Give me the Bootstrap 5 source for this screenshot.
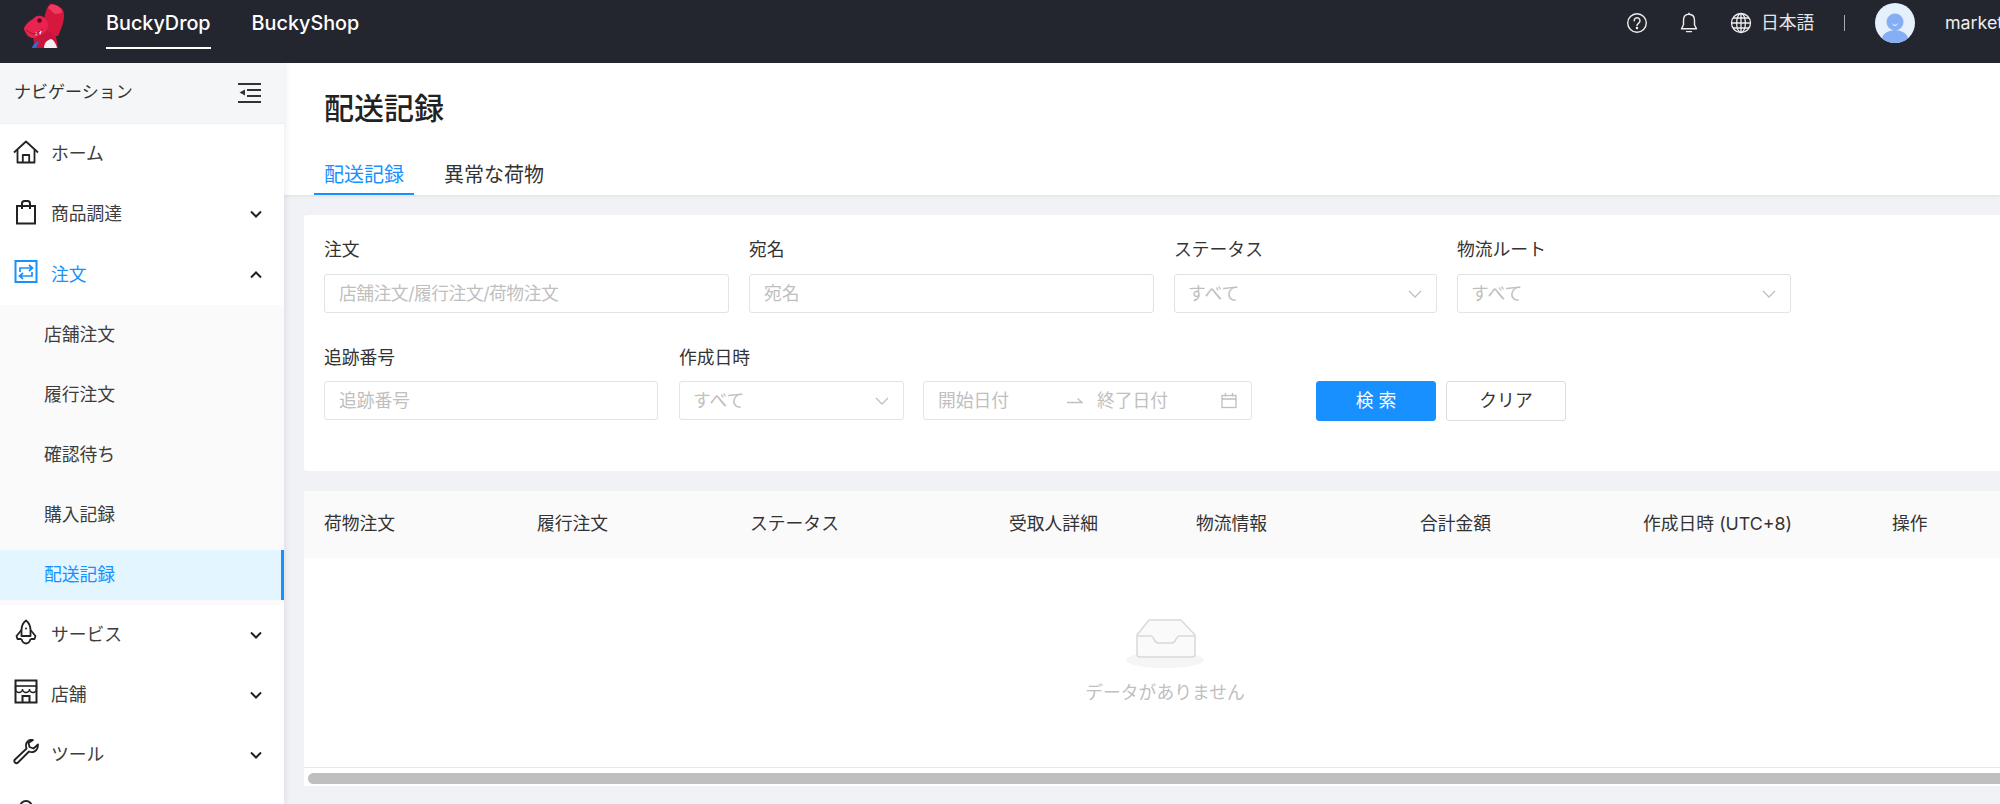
<!DOCTYPE html>
<html lang="ja">
<head>
<meta charset="utf-8">
<title>配送記録</title>
<link href="https://cdn.jsdelivr.net/npm/bootstrap@5.3.0/dist/css/bootstrap.min.css" rel="stylesheet">
<style>
:root{--blue:#1890ff;--ink:#333;--line:#e3e3e3;--ph:#bfbfbf}
html,body{height:804px;overflow:hidden}
body{font-family:Inter,"Noto Sans CJK JP",sans-serif;font-size:17.8px;color:var(--ink);background:#f0f2f5}
.top-bar{height:63px;background:#23262e;padding:0;flex-wrap:nowrap;align-items:stretch}
.brand-logo{width:106px;flex:none;padding:0}
.brand-link{color:#fff;font-size:19.8px;font-weight:500;padding:0;height:49px;line-height:47px;border-bottom:2px solid transparent}
.brand-link.on{border-bottom-color:#fff}
.brand-link:hover{color:#fff}
.brand-gap{gap:41px}
.top-right{height:46px;color:#e8e8e8;white-space:nowrap;margin-left:auto;width:374px;overflow:hidden;flex:none}
.top-right svg{flex:none}
.top-right .lang{width:50px;flex:none;color:#e6e6e6;line-height:1;white-space:nowrap}
.top-right .sep{width:1px;height:16px;background:#aaa;flex:none}
.top-right .who{color:#eee;font-size:17.8px}
.gap-a{margin-left:31px}.gap-b{margin-left:9px}.gap-c{margin-left:33px}.gap-d{margin-left:30px}
.shell{height:741px;overflow:hidden}
.side{width:284px;flex:none;background:#fff;box-shadow:2px 0 6px rgba(0,21,41,.07);position:relative;z-index:2;overflow:hidden}
.side-head{height:61px;background:#f5f6f8;padding:0 22px 0 14px;font-size:17px;border-bottom:1px solid #f0f0f0}
.side-list{padding-top:6px}
.side-row{height:50px;margin-bottom:10px;padding:0 22px 2px 51px;position:relative;color:#3d3d3d;line-height:1}
.side-row .ic{position:absolute;left:13px;top:9px;width:26px;height:26px;color:#222}
.side-row.act{color:var(--blue);padding-bottom:0}
.side-row.act .ic{color:var(--blue)}
.side-sub{background:#fafafa;margin-top:-5px;padding:5px 0;margin-bottom:5px}
.side-sub .side-row{padding-left:44px;margin-bottom:10px;padding-bottom:0}
.side-sub .side-row:last-child{margin-bottom:0;background:#e3f5ff;color:var(--blue);border-right:3px solid var(--blue)}
.side-sub ~ .side-row{padding-bottom:0}
.page-main{min-width:0;flex:1 1 auto;overflow:hidden}
.page-head{height:132px;background:#fff;padding:0 0 0 40px;box-shadow:0 1px 4px rgba(0,21,41,.08);position:relative;z-index:1}
.page-head h1{font-size:30px;font-weight:500;margin:0;line-height:1;padding-top:30px;height:100px;color:#222}
.tab-strip{margin-left:-10px}
.tab-item{height:32px;padding:0 10px;font-size:20px;line-height:24px;color:#333;border-bottom:2px solid transparent;white-space:nowrap}
.tab-item.on{color:var(--blue);border-bottom-color:var(--blue);width:100px}
.tab-strip .tab-item + .tab-item{margin-left:20px}
.filter-pane{margin:20px 0 0 20px;height:256px;background:#fff;border-radius:3px 0 0 3px;padding:23px 0 0 20px}
.f-line{height:108px}
.f-line.second{height:106px}
.f-line:not(.second) label{margin-bottom:10px}
.f-col{flex:none}
.f-col label{display:block;line-height:24px;height:26px;margin:0 0 9px;color:#333;font-size:17.8px}
.w405{width:405px}.w263{width:263px}.w334{width:334px}.w225{width:225px}.w329{width:329px}
.f-ctl{height:39px;border:1px solid var(--line);border-radius:3px;font-size:17.8px;padding:0 14px;color:var(--ph);box-shadow:none;line-height:1}
.f-ctl::placeholder{color:var(--ph);opacity:1}
.tight::placeholder{letter-spacing:-.5px}
.select-box{padding:0 14px 0 13px}
.btn-find{width:120px;height:40px;background:var(--blue);border-color:var(--blue);color:#fff;border-radius:3px;font-size:17.8px;padding:0;margin-left:64px}
.btn-clear{width:120px;height:40px;background:#fff;border:1px solid #ddd;color:#333;border-radius:3px;font-size:17.8px;padding:0;margin-left:10px}
.gap20{gap:20px}
.btn-cell{padding-top:35px}
.ml21{margin-left:21px}.ml19{margin-left:19px}
.date-from{width:129px}
.date-to{margin-left:14px}
.table-pane{margin:20px 0 0 20px;height:295px;background:#fff;position:relative;overflow:hidden}
.data-tbl{table-layout:fixed;width:2000px;margin:0;--bs-table-border-color:transparent}
.data-tbl th{background:#fafafa;height:67px;padding:0 0 0 20px;font-weight:400;color:#333;vertical-align:middle;font-size:17.8px;white-space:nowrap;border:0}
.empty-cell{height:209px;text-align:center;padding:0!important;border-bottom:1px solid #e8e8e8!important}
.empty-wrap{width:1722px;height:209px;padding-top:61px;text-align:center;color:#bfbfbf;font-size:17.8px;line-height:1}
.empty-wrap svg{display:block;margin:0 auto 15px}
.scroll-track{height:19px;padding:5px 0 3px 4px;background:#fff}
.scroll-thumb{height:11px;background:#bfbfbf;border-radius:6px 0 0 6px}
</style>
</head>
<body>
<nav class="navbar top-bar d-flex">
  <div class="brand-logo d-flex align-items-start">
    <svg width="106" height="63" viewBox="0 0 106 63">
      <path d="M44 24C44 16 46 8 50 4c2-1 7 1 11 4 3 2 3 5 3 8 0 6-3 14-6 20H46Z" fill="#d8173f"/>
      <path d="M48 8c2-4 4-4 7-3 4 1 7 4 7 8l-7 1Z" fill="#ee3a5c"/>
      <path d="M33 37 46 30 56 36 58 48H35Z" fill="#c9143b"/>
      <path d="M44 48c0-5 3-8 7-9 3 1 5 5 6 9Z" fill="#f3eef2"/>
      <path d="M32 48c1-4 4-6 8-7-2 2-3 4-4 7Z" fill="#2f6fd0"/>
      <path d="M24 28c2-4 5-7 9-9 2-3 6-4 8-3 4 1 7 5 7 9 0 5-4 9-8 10-2 1-5 3-8 3-3-1-5-2-6-5-1-1-2-3-2-5Z" fill="#e8234f"/>
      <circle cx="39.500" cy="20.500" r="2.300" fill="#5a0b22"/>
      <path d="M39 31 40 35 42 30ZM35 33 36 36 37.500 32Z" fill="#fff"/>
      <path d="M26 30c3 2 6 4 9 4 3-1 5-3 8-5" stroke="#a20f33" stroke-width="1" fill="none"/>
    </svg>
  </div>
  <div class="d-flex brand-gap">
    <a class="brand-link on text-decoration-none" href="#">BuckyDrop</a>
    <a class="brand-link text-decoration-none" href="#">BuckyShop</a>
  </div>
  <div class="top-right d-flex align-items-center">
    <svg width="22" height="22" viewBox="0 0 22 22" fill="none" stroke="#eee" stroke-width="1.400"><circle cx="11" cy="11" r="9.300"/><path d="M8.200 8.700a2.900 2.900 0 1 1 4.500 2.400c-1 .7-1.700 1.200-1.700 2.500" stroke-linecap="round"/><circle cx="11" cy="16" r=".6" fill="#eee"/></svg>
    <svg class="gap-a" width="20" height="22" viewBox="0 0 20 22" fill="none" stroke="#eee" stroke-width="1.400"><path d="M10 2.200c-3.700 0-5.500 2.800-5.500 6v4.500L2.500 16.800h15l-2-4.100V8.200c0-3.200-1.800-6-5.500-6Z" stroke-linejoin="round"/><path d="M7.500 19.600h5" stroke-linecap="round"/><path d="M10 .8v1.400"/></svg>
    <svg class="gap-a" width="22" height="22" viewBox="0 0 22 22" fill="none" stroke="#eee" stroke-width="1.300"><circle cx="11" cy="11" r="9.500"/><ellipse cx="11" cy="11" rx="4.400" ry="9.500"/><path d="M11 1.500v19M1.500 11h19M3 6h16M3 16h16"/></svg>
    <span class="lang gap-b">日本語</span>
    <span class="sep gap-c"></span>
    <svg class="gap-d" width="40" height="40" viewBox="0 0 40 40"><defs><clipPath id="av"><circle cx="20" cy="20" r="20"/></clipPath></defs><g clip-path="url(#av)"><rect width="40" height="40" fill="#e6f0fd"/><circle cx="20" cy="19" r="8.500" fill="#85aef5"/><path d="M17.500 21a3 3 0 0 0 5 0" stroke="#fff" stroke-width="1" fill="none"/><ellipse cx="20" cy="36" rx="13" ry="9" fill="#85aef5"/></g></svg>
    <span class="who gap-d">market</span>
  </div>
</nav>
<div class="shell d-flex">
  <aside class="side">
    <div class="side-head d-flex align-items-center justify-content-between">
      <span>ナビゲーション</span>
      <svg width="24" height="22" viewBox="0 0 24 22" fill="#333"><rect y="1" width="23" height="2"/><rect x="9" y="7" width="14" height="2"/><rect x="9" y="13" width="14" height="2"/><rect y="19" width="23" height="2"/><path d="M7 7.500v6L1.500 10.500Z"/></svg>
    </div>
    <div class="side-list">
      <div class="side-row d-flex align-items-center">
        <svg class="ic" viewBox="0 0 26 26" fill="none" stroke="currentColor" stroke-width="1.800" stroke-linejoin="round"><path d="M1 13.500 13 2.500l12 11"/><path d="M4.500 11v12.500h17V11"/><path d="M9.800 23.500v-7.500h6.400v7.500"/></svg>
        <span>ホーム</span>
      </div>
      <div class="side-row d-flex align-items-center justify-content-between">
        <svg class="ic" viewBox="0 0 26 26" fill="none" stroke="currentColor" stroke-width="2"><rect x="4" y="7" width="18" height="17.500"/><path d="M9 10V4.500a2.500 2.500 0 0 1 2.500-2.500h3A2.500 2.500 0 0 1 17 4.500V10"/></svg>
        <span>商品調達</span>
        <svg width="12" height="8" viewBox="0 0 12 8" fill="none" stroke="#222" stroke-width="2"><path d="M1 1.500 6 6.500 11 1.500"/></svg>
      </div>
      <div class="side-row act d-flex align-items-center justify-content-between">
        <svg class="ic" viewBox="0 0 26 26" fill="none" stroke="currentColor" stroke-width="2"><rect x="2.500" y="2" width="21" height="21"/><path d="M7 13V9h12M16 6l3.500 3L16 12M19 13v4H7M10 14l-3.500 3L10 20" stroke-width="1.700"/></svg>
        <span>注文</span>
        <svg width="12" height="8" viewBox="0 0 12 8" fill="none" stroke="#222" stroke-width="2"><path d="M1 6.500 6 1.500 11 6.500"/></svg>
      </div>
      <div class="side-sub">
        <div class="side-row d-flex align-items-center">店舗注文</div>
        <div class="side-row d-flex align-items-center">履行注文</div>
        <div class="side-row d-flex align-items-center">確認待ち</div>
        <div class="side-row d-flex align-items-center">購入記録</div>
        <div class="side-row d-flex align-items-center">配送記録</div>
      </div>
      <div class="side-row d-flex align-items-center justify-content-between">
        <svg class="ic" viewBox="0 0 26 26" fill="none" stroke="currentColor" stroke-width="1.800" stroke-linejoin="round"><path d="M13 1.500c-3.200 2.500-4.500 6-4.500 9.500v6h9v-6c0-3.500-1.300-7-4.500-9.500Z"/><path d="M8.500 11 3.500 17l1 3h4M17.500 11l5 6-1 3h-4"/><path d="M8.500 20c1 3.500 3 4.500 4.500 4.500s3.500-1 4.500-4.500"/><circle cx="13" cy="9.500" r="1" fill="currentColor" stroke="none"/></svg>
        <span>サービス</span>
        <svg width="12" height="8" viewBox="0 0 12 8" fill="none" stroke="#222" stroke-width="2"><path d="M1 1.500 6 6.500 11 1.500"/></svg>
      </div>
      <div class="side-row d-flex align-items-center justify-content-between">
        <svg class="ic" viewBox="0 0 26 26" fill="none" stroke="currentColor" stroke-width="2"><rect x="2.500" y="1.500" width="21" height="22"/><path d="M2.500 7h21" stroke-width="1.600"/><path d="M2.500 7v3a3.500 3.500 0 0 0 7 0 3.500 3.500 0 0 0 7 0 3.500 3.500 0 0 0 7 0V7" stroke-width="1.400"/><path d="M9.500 23.500V17h7v6.500"/></svg>
        <span>店舗</span>
        <svg width="12" height="8" viewBox="0 0 12 8" fill="none" stroke="#222" stroke-width="2"><path d="M1 1.500 6 6.500 11 1.500"/></svg>
      </div>
      <div class="side-row d-flex align-items-center justify-content-between">
        <svg class="ic" viewBox="0 0 26 26" fill="none" stroke="currentColor" stroke-width="1.800" stroke-linejoin="round"><path d="M25 5.500 20.500 9.500 16.500 8 15.500 4 20 1C16 0 12.500 3 13 7.500c.1.800.3 1.400.6 2L2 20.500c-1 1-1 2 0 3s2 1 3 0L16 12.500c3 1.500 9 .5 9-7Z"/></svg>
        <span>ツール</span>
        <svg width="12" height="8" viewBox="0 0 12 8" fill="none" stroke="#222" stroke-width="2"><path d="M1 1.500 6 6.500 11 1.500"/></svg>
      </div>
      <div class="side-row d-flex align-items-center">
        <svg class="ic" viewBox="0 0 26 26" fill="none" stroke="currentColor" stroke-width="1.800"><circle cx="13" cy="8" r="6"/></svg>
      </div>
    </div>
  </aside>
  <main class="page-main">
    <div class="page-head">
      <h1>配送記録</h1>
      <div class="tab-strip d-flex">
        <div class="tab-item on">配送記録</div>
        <div class="tab-item">異常な荷物</div>
      </div>
    </div>
    <section class="filter-pane">
      <div class="f-line d-flex gap20">
        <div class="f-col w405"><label>注文</label><input class="form-control f-ctl tight" placeholder="店舗注文/履行注文/荷物注文"></div>
        <div class="f-col w405"><label>宛名</label><input class="form-control f-ctl" placeholder="宛名"></div>
        <div class="f-col w263"><label>ステータス</label><div class="f-ctl select-box d-flex align-items-center justify-content-between">すべて<svg width="14" height="8" viewBox="0 0 14 8" fill="none" stroke="#bfbfbf" stroke-width="1.300"><path d="M1 1 7 7 13 1"/></svg></div></div>
        <div class="f-col w334"><label>物流ルート</label><div class="f-ctl select-box d-flex align-items-center justify-content-between">すべて<svg width="14" height="8" viewBox="0 0 14 8" fill="none" stroke="#bfbfbf" stroke-width="1.300"><path d="M1 1 7 7 13 1"/></svg></div></div>
      </div>
      <div class="f-line second d-flex">
        <div class="f-col w334"><label>追跡番号</label><input class="form-control f-ctl" placeholder="追跡番号"></div>
        <div class="f-col w225 ml21"><label>作成日時</label><div class="f-ctl select-box d-flex align-items-center justify-content-between">すべて<svg width="14" height="8" viewBox="0 0 14 8" fill="none" stroke="#bfbfbf" stroke-width="1.300"><path d="M1 1 7 7 13 1"/></svg></div></div>
        <div class="f-col w329 ml19"><label>&nbsp;</label><div class="f-ctl d-flex align-items-center"><span class="date-from">開始日付</span><svg width="16" height="8" viewBox="0 0 16 8" fill="none" stroke="#bfbfbf" stroke-width="1.300"><path d="M0 5.500h15L10.500 1.500"/></svg><span class="date-to">終了日付</span><svg class="ms-auto" width="16" height="16" viewBox="0 0 16 16" fill="none" stroke="#bfbfbf" stroke-width="1.300"><rect x="1" y="2.500" width="14" height="12"/><path d="M1 6h14M4.500 0v3.500M11.500 0v3.500"/></svg></div></div>
        <div class="f-col btn-cell d-flex align-items-start">
          <button class="btn btn-primary btn-find" type="button">検 索</button>
          <button class="btn btn-clear" type="button">クリア</button>
        </div>
      </div>
    </section>
    <section class="table-pane">
      <table class="table data-tbl">
        <colgroup><col style="width:213px"><col style="width:213px"><col style="width:259px"><col style="width:187px"><col style="width:224px"><col style="width:223px"><col style="width:249px"><col></colgroup>
        <thead><tr><th>荷物注文</th><th>履行注文</th><th>ステータス</th><th>受取人詳細</th><th>物流情報</th><th>合計金額</th><th>作成日時 (UTC+8)</th><th>操作</th></tr></thead>
        <tbody><tr><td class="empty-cell" colspan="8"><div class="empty-wrap">
          <svg width="80" height="50" viewBox="0 0 80 50"><ellipse cx="40" cy="41" rx="39" ry="8" fill="#f5f5f5"/><path d="M12 16 24 1h32l14 15v19a3 3 0 0 1-3 3H15a3 3 0 0 1-3-3Z" fill="#fafafa" stroke="#d9d9d9" stroke-width="1.500"/><path d="M12 17h14c3 0 3 7 7 7h14c4 0 4-7 7-7h16" fill="none" stroke="#d9d9d9" stroke-width="1.500"/></svg>
          データがありません
        </div></td></tr></tbody>
      </table>
      <div class="scroll-track"><div class="scroll-thumb"></div></div>
    </section>
  </main>
</div>
<script src="https://cdn.jsdelivr.net/npm/bootstrap@5.3.0/dist/js/bootstrap.bundle.min.js"></script>
</body>
</html>
